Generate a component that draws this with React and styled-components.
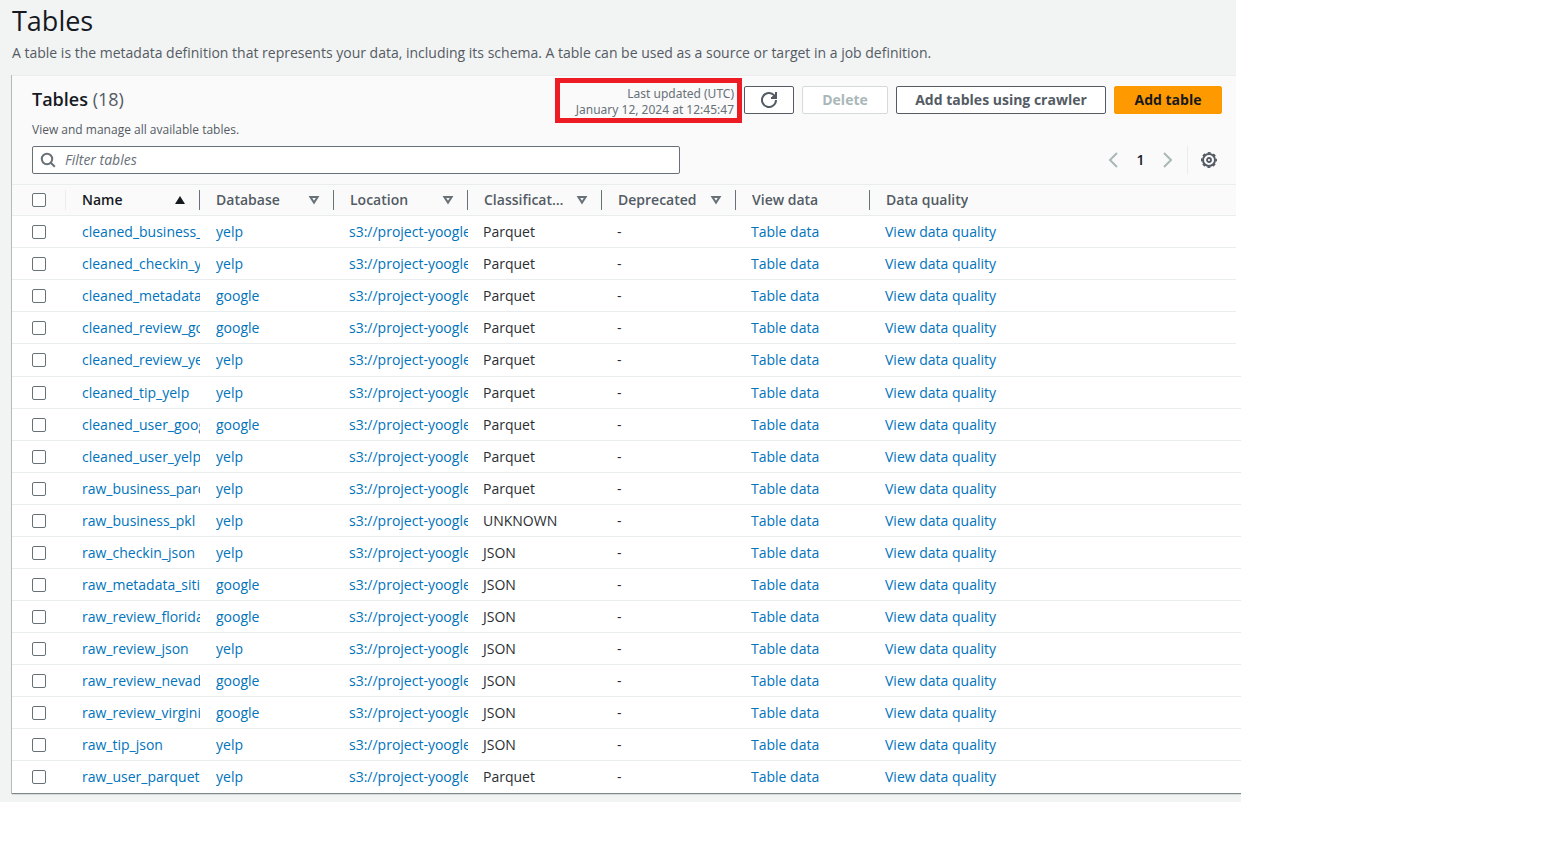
import React from "react";
import styled, { createGlobalStyle, css } from "styled-components";

const GlobalStyle = createGlobalStyle`
  *, *::before, *::after { box-sizing: border-box; }
  body {
    margin: 0;
    background: #ffffff;
    color: #16191f;
    font-family: "Open Sans", "Noto Sans", sans-serif;
    font-size: 14px;
    line-height: 20px;
  }
  button, input { font: inherit; }
`;

/* The upper part of the page stops 5px short of the lower part. */
const STEP = "5px";

const Page = styled.main`
  margin-right: 321px;
  padding: 0 0 8px 12px;
  background: linear-gradient(#f2f3f3, #f2f3f3) left top / calc(100% - ${STEP}) 100% no-repeat,
    linear-gradient(#f2f3f3, #f2f3f3) right bottom / 100% 9px no-repeat;
`;

const PageHeader = styled.header`
  padding: 3px 0 12px;
`;

const PageTitle = styled.h1`
  margin: 0;
  font-size: 27px;
  line-height: 36px;
  font-weight: 400;
`;

const PageText = styled.p`
  margin: 4px 0 0;
  color: #545b64;
  white-space: nowrap;
`;

const Card = styled.section`
  background: #ffffff;
  box-shadow: -1px 0 0 #b4baba, 0 1px 0 #d5dbdb;
  border-bottom: 1px solid #7f8989;
`;

const CardTop = styled.div`
  margin-right: ${STEP};
  padding: 2px 14px 10px 20px;
  background: #fafafa;
  border-top: 1px solid #eaeded;
`;

const Row = styled.div`
  display: flex;
  justify-content: space-between;
  align-items: flex-start;
`;

const CardTitle = styled.h2`
  margin: 0;
  padding-top: 9px;
  font-size: 18px;
  line-height: 24px;
  font-weight: 600;
`;

const Count = styled.span`
  color: #545b64;
  font-weight: 400;
`;

const CardText = styled.p`
  margin: 0 0 9px;
  font-size: 12px;
  line-height: 14px;
  color: #545b64;
`;

const Actions = styled.div`
  display: flex;
  align-items: flex-start;
  gap: 2px;
`;

const Updated = styled.div`
  min-width: 187px;
  height: 45px;
  padding: 3px 3px 0 0;
  border: 5px solid #ed1c24;
  font-family: "Noto Sans", "Open Sans", sans-serif;
  font-size: 12px;
  line-height: 16px;
  text-align: right;
  color: #687078;
  white-space: nowrap;
`;

const Buttons = styled.div`
  display: flex;
  gap: 8px;
  padding-top: 8px;
`;

const variants = {
  normal: css`
    background: #ffffff;
    border-color: #545b64;
    color: #545b64;
  `,
  disabled: css`
    background: #ffffff;
    border-color: #d5dbdb;
    color: #aab7b8;
  `,
  primary: css`
    background: #ff9900;
    border-color: #ff9900;
    color: #16191f;
  `,
};

const Button = styled.button`
  display: flex;
  align-items: center;
  justify-content: center;
  width: ${(p) => p.$width};
  height: 28px;
  padding: 0;
  border: 1px solid;
  border-radius: 2px;
  font-weight: 700;
  white-space: nowrap;
  ${(p) => variants[p.$variant || "normal"]}
`;

const Search = styled.label`
  display: flex;
  align-items: center;
  gap: 9px;
  width: 648px;
  height: 28px;
  padding: 0 8px 0 7px;
  background: #ffffff;
  border: 1px solid #687078;
  border-radius: 2px;
`;

const SearchInput = styled.input`
  flex: 1;
  min-width: 0;
  padding: 0;
  border: 0;
  outline: 0;
  background: transparent;
  &::placeholder {
    color: #687078;
    font-style: italic;
    opacity: 1;
  }
`;

const Tools = styled.div`
  display: flex;
  align-items: center;
  height: 28px;
  padding-right: 5px;
`;

const IconButton = styled.button`
  display: flex;
  padding: 0;
  border: 0;
  background: none;
  color: ${(p) => p.$color || "#aab7b8"};
`;

const PageNumber = styled.button`
  width: 45px;
  padding: 0;
  border: 0;
  background: none;
  color: #16191f;
  font-weight: 600;
`;

const Divider = styled.span`
  width: 1px;
  height: 28px;
  margin: 0 13px 0 14px;
  background: #eaeded;
`;

const Table = styled.table`
  width: 100%;
  table-layout: fixed;
  border-collapse: separate;
  border-spacing: 0;
`;

const Col = styled.col`
  width: ${(p) => p.$width || "auto"};
`;

const HeadRow = styled.tr`
  height: 32px;
  background: linear-gradient(#eaeded, #eaeded) left top / calc(100% - ${STEP}) 1px no-repeat,
    linear-gradient(#eaeded, #eaeded) left bottom / calc(100% - ${STEP}) 1px no-repeat,
    linear-gradient(#fafafa, #fafafa) left top / calc(100% - ${STEP}) 100% no-repeat;
`;

const BodyRow = styled.tr`
  height: ${(p) => (p.$tall ? "33px" : "32px")};
  background: linear-gradient(#eaeded, #eaeded) left bottom /
    ${(p) => (p.$short ? `calc(100% - ${STEP})` : "100%")} 1px no-repeat;
  &:last-child { background: none; }
  & > td { padding-bottom: ${(p) => (p.$tall ? "1px" : "0")}; }
`;

const HeadCell = styled.th`
  padding: 0;
  text-align: left;
  font-weight: 600;
  color: ${(p) => (p.$active ? "#16191f" : "#545b64")};
`;

const HeadInner = styled.div`
  display: flex;
  align-items: center;
  justify-content: space-between;
  gap: 11px;
  height: 20px;
  padding: 0 13px 0 16px;
  border-right: ${(p) => (p.$last ? "0" : "1px solid #687078")};
  & > svg { flex: none; }
`;

const HeadLabel = styled.span`
  overflow: hidden;
  text-overflow: ellipsis;
  white-space: nowrap;
`;

const CheckHead = styled.th`
  padding: 0;
`;

const CheckInner = styled.div`
  display: flex;
  align-items: center;
  height: 20px;
  padding-left: 20px;
  border-right: 1px solid #eaeded;
`;

const CheckCell = styled.td`
  padding: 0 0 0 20px;
`;

const Checkbox = styled.input`
  appearance: none;
  display: block;
  width: 14px;
  height: 14px;
  margin: 0;
  background: #ffffff;
  border: 1px solid #687078;
  border-radius: 2px;
`;

const Cell = styled.td`
  padding: 0 0 0 ${(p) => (p.$near ? "15px" : "16px")};
  overflow: hidden;
  white-space: nowrap;
  color: #2a2e33;
`;

const Link = styled.a`
  color: #0073bb;
  text-decoration: none;
`;

const SortIcon = ({ active }) => (
  <svg width="12" height="10" viewBox="0 0 12 10" aria-hidden="true">
    {active ? (
      <path d="M6 1 11 9H1z" fill="#16191f" />
    ) : (
      <path d="M2.4 2h7.2L6 7.6z" fill="none" stroke="#687078" strokeWidth="2" />
    )}
  </svg>
);

const SearchIcon = () => (
  <svg width="16" height="16" viewBox="0 0 16 16" fill="none" stroke="#687078" strokeWidth="2" aria-hidden="true">
    <circle cx="7" cy="7" r="5.2" />
    <path d="m10.8 10.8 4 4" />
  </svg>
);

const RefreshIcon = () => (
  <svg width="16" height="16" viewBox="0 0 16 16" fill="none" stroke="currentColor" strokeWidth="2" aria-hidden="true">
    <path d="M15 8a7 7 0 1 1-2-4.9l2 2" />
    <path d="M15 0v6h-5" />
    <path d="M11 4.6 15 2v4h-4z" fill="currentColor" stroke="none" />
  </svg>
);

const Chevron = ({ d }) => (
  <svg width="10" height="16" viewBox="0 0 10 16" fill="none" stroke="currentColor" strokeWidth="2" aria-hidden="true">
    <path d={d} />
  </svg>
);

const GearIcon = () => (
  <svg width="16" height="16" viewBox="0 0 16 16" fill="none" stroke="currentColor" aria-hidden="true">
    <circle cx="8" cy="8" r="6" strokeWidth="2" />
    <circle cx="8" cy="8" r="7.2" strokeWidth="1.6" strokeDasharray="3 2.65" strokeDashoffset="1.5" />
    <circle cx="8" cy="8" r="2" strokeWidth="1.8" />
  </svg>
);

const columns = [
  { label: "Name", sort: true, active: true },
  { label: "Database", sort: true },
  { label: "Location", sort: true },
  { label: "Classification", sort: true },
  { label: "Deprecated", sort: true },
  { label: "View data" },
  { label: "Data quality" },
];

const rows = [
  ["cleaned_business_yelp", "yelp", "Parquet"],
  ["cleaned_checkin_yelp", "yelp", "Parquet"],
  ["cleaned_metadata_google", "google", "Parquet"],
  ["cleaned_review_google", "google", "Parquet"],
  ["cleaned_review_yelp", "yelp", "Parquet"],
  ["cleaned_tip_yelp", "yelp", "Parquet"],
  ["cleaned_user_google", "google", "Parquet"],
  ["cleaned_user_yelp", "yelp", "Parquet"],
  ["raw_business_parquet", "yelp", "Parquet"],
  ["raw_business_pkl", "yelp", "UNKNOWN"],
  ["raw_checkin_json", "yelp", "JSON"],
  ["raw_metadata_sitios", "google", "JSON"],
  ["raw_review_florida", "google", "JSON"],
  ["raw_review_json", "yelp", "JSON"],
  ["raw_review_nevada", "google", "JSON"],
  ["raw_review_virginia", "google", "JSON"],
  ["raw_tip_json", "yelp", "JSON"],
  ["raw_user_parquet", "yelp", "Parquet"],
];

export default function App() {
  return (
    <>
      <GlobalStyle />
      <Page>
        <PageHeader>
          <PageTitle>Tables</PageTitle>
          <PageText>
            A table is the metadata definition that represents your data, including its schema. A table can be used as
            a source or target in a job definition.
          </PageText>
        </PageHeader>
        <Card>
          <CardTop>
            <Row>
              <CardTitle>
                Tables <Count>(18)</Count>
              </CardTitle>
              <Actions>
                <Updated>
                  Last updated (UTC)
                  <br />
                  January 12, 2024 at 12:45:47
                </Updated>
                <Buttons>
                  <Button $width="50px" aria-label="Refresh">
                    <RefreshIcon />
                  </Button>
                  <Button $width="86px" $variant="disabled" disabled>
                    Delete
                  </Button>
                  <Button $width="210px">Add tables using crawler</Button>
                  <Button $width="108px" $variant="primary">
                    Add table
                  </Button>
                </Buttons>
              </Actions>
            </Row>
            <CardText>View and manage all available tables.</CardText>
            <Row>
              <Search>
                <SearchIcon />
                <SearchInput type="text" placeholder="Filter tables" aria-label="Filter tables" />
              </Search>
              <Tools>
                <IconButton aria-label="Previous page">
                  <Chevron d="M9 1 2 8l7 7" />
                </IconButton>
                <PageNumber>1</PageNumber>
                <IconButton aria-label="Next page">
                  <Chevron d="m1 1 7 7-7 7" />
                </IconButton>
                <Divider />
                <IconButton $color="#545b64" aria-label="Preferences">
                  <GearIcon />
                </IconButton>
              </Tools>
            </Row>
          </CardTop>
          <Table>
            <colgroup>
              <Col $width="54px" />
              {columns.map((c, i) => (
                <Col key={c.label} $width={i < 6 ? "134px" : undefined} />
              ))}
            </colgroup>
            <thead>
              <HeadRow>
                <CheckHead>
                  <CheckInner>
                    <Checkbox type="checkbox" aria-label="Select all tables" />
                  </CheckInner>
                </CheckHead>
                {columns.map((c, i) => (
                  <HeadCell key={c.label} $active={c.active} scope="col">
                    <HeadInner $last={i === 6}>
                      <HeadLabel>{c.label}</HeadLabel>
                      {c.sort && <SortIcon active={c.active} />}
                    </HeadInner>
                  </HeadCell>
                ))}
              </HeadRow>
            </thead>
            <tbody>
              {rows.map(([name, database, kind], i) => (
                <BodyRow key={name} $tall={i === 4} $short={i < 4}>
                  <CheckCell>
                    <Checkbox type="checkbox" aria-label={`Select ${name}`} />
                  </CheckCell>
                  <Cell>
                    <Link href="#table">{name}</Link>
                  </Cell>
                  <Cell>
                    <Link href="#database">{database}</Link>
                  </Cell>
                  <Cell $near>
                    <Link href="#location">s3://project-yoogle</Link>
                  </Cell>
                  <Cell $near>{kind}</Cell>
                  <Cell $near>-</Cell>
                  <Cell $near>
                    <Link href="#data">Table data</Link>
                  </Cell>
                  <Cell $near>
                    <Link href="#quality">View data quality</Link>
                  </Cell>
                </BodyRow>
              ))}
            </tbody>
          </Table>
        </Card>
      </Page>
    </>
  );
}
